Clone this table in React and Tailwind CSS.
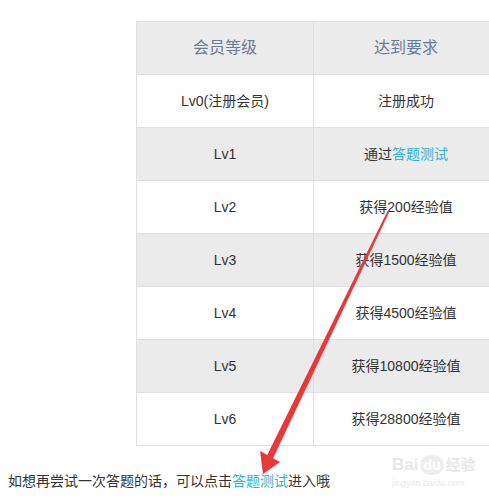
const rows = [
  { level: 'Lv0(注册会员)', req: '注册成功' },
  { level: 'Lv1', req: <>通过<span className="text-[#2fb3d6]">答题测试</span></> },
  { level: 'Lv2', req: '获得200经验值' },
  { level: 'Lv3', req: '获得1500经验值' },
  { level: 'Lv4', req: '获得4500经验值' },
  { level: 'Lv5', req: '获得10800经验值' },
  { level: 'Lv6', req: '获得28800经验值' },
];

export default function App() {
  return (
    <div
      className="relative w-[489px] h-[498px] overflow-hidden bg-white"
      style={{ fontFamily: '"Liberation Sans", "Noto Sans CJK SC", sans-serif' }}
    >
      <div className="pt-[21px] pl-[136px]">
        <div className="w-[362px] border-l border-t border-[#dde1e5]">
          {/* header */}
          <div className="flex h-[53px] bg-[#ebebeb] border-b border-[#dde1e5] text-[16px] text-[#6b7c96]">
            <div className="w-[177px] flex items-center justify-center border-r border-[#dde1e5]">会员等级</div>
            <div className="w-[184px] flex items-center justify-center">达到要求</div>
          </div>
          {rows.map((r, i) => (
            <div
              key={r.level}
              className={`flex h-[53px] border-b border-[#dde1e5] text-[14px] text-[#333] ${i % 2 === 1 ? 'bg-[#ebebeb]' : 'bg-white'}`}
            >
              <div className="w-[177px] flex items-center justify-center border-r border-[#dde1e5]">{r.level}</div>
              <div className="w-[184px] flex items-center justify-center">{r.req}</div>
            </div>
          ))}
        </div>
      </div>

      <p className="mt-[25px] pl-[8px] text-[14px] text-[#333] leading-[20px]">
        如想再尝试一次答题的话，可以点击<span className="text-[#2fb3d6]">答题测试</span>进入哦
      </p>

      {/* watermark */}
      <div className="absolute left-[392px] top-[455px] text-[#e8e8e8] pointer-events-none whitespace-nowrap">
        <div className="flex items-center gap-[2px] text-[17px] font-bold leading-[20px]">
          <span>Bai</span>
          <span className="rounded-full bg-[#eeeeee] text-white text-[14px] px-[3px]">du</span>
          <span className="text-[15px]">经验</span>
        </div>
        <div className="text-[9px] leading-[12px] mt-[2px]">jingyan.baidu.com</div>
      </div>

      {/* red arrow */}
      <svg className="absolute left-0 top-0 pointer-events-none" width="489" height="498" viewBox="0 0 489 498">
        <polygon points="387.5,211 389,212.5 273,458.5 267,455.5" fill="#e8383a" />
        <polygon points="260,451 280,462 263,474" fill="#e8383a" />
      </svg>
    </div>
  );
}
